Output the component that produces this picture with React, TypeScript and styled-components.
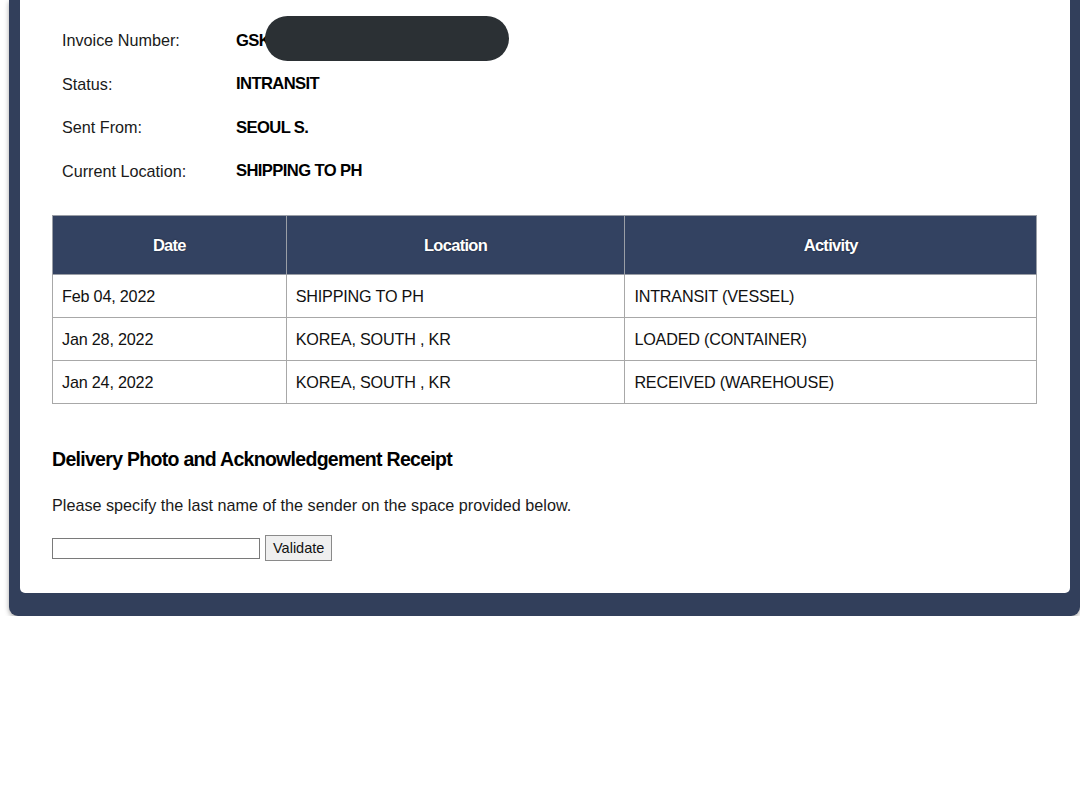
import React from "react";
import styled, { createGlobalStyle } from "styled-components";

const Global = createGlobalStyle`
  html, body { margin: 0; padding: 0; background: #ffffff; }
  body { font-family: "Liberation Sans", Arial, sans-serif; color: #111; overflow: hidden; }
`;

const Frame = styled.div`
  margin-left: 9px;
  width: 1071px;
  background: #323f5b;
  padding: 0 10px 23px 11px;
  box-sizing: border-box;
  border-radius: 0 0 9px 9px;
  box-shadow: 0 2px 5px rgba(0, 0, 0, 0.35);
`;

const Card = styled.div`
  background: #ffffff;
  border-radius: 0 0 5px 5px;
  padding: 19px 33px 32px 32px;
`;

const InfoGrid = styled.div`
  display: grid;
  grid-template-columns: 174px auto;
  padding-left: 10px;
  position: relative;
`;

const InfoLabel = styled.div`
  font-size: 16.2px;
  height: 43.5px;
  display: flex;
  align-items: center;
  color: #1a1a1a;
`;

const InfoValue = styled.div`
  font-size: 16.6px;
  height: 43.5px;
  display: flex;
  align-items: center;
  font-weight: bold;
  letter-spacing: -0.6px;
  color: #000;
  position: relative;
`;

const Redact = styled.span`
  position: absolute;
  left: 29px;
  top: -3px;
  width: 244px;
  height: 45px;
  border-radius: 23px;
  background: #2b3034;
`;

const Table = styled.table`
  width: 985px;
  border-collapse: collapse;
  margin-top: 22px;
  border: 1px solid #a0a0a0;
`;

const Th = styled.th<{ $w: number }>`
  width: ${(p) => p.$w}px;
  background: #334261;
  color: #fff;
  height: 59px;
  font-size: 16.5px;
  font-weight: bold;
  letter-spacing: -0.7px;
  text-shadow: 0 0 2px rgba(0, 0, 0, 0.5);
  border: 1px solid #9a9ea6;
  text-align: center;
  padding: 0;
  box-sizing: border-box;
`;

const Td = styled.td`
  height: 43px;
  font-size: 16.2px;
  border: 1px solid #a8a8a8;
  padding: 1px 9px 0;
  box-sizing: border-box;
  color: #111;
  letter-spacing: -0.2px;
`;

const Heading = styled.h2`
  margin: 38px 0 0;
  font-size: 19.5px;
  font-weight: bold;
  letter-spacing: -0.7px;
  color: #000;
  line-height: 34px;
`;

const Para = styled.p`
  margin: 17px 0 0;
  font-size: 16.2px;
  line-height: 24px;
  color: #1a1a1a;
`;

const FormRow = styled.div`
  margin-top: 18px;
  display: flex;
  align-items: center;
  gap: 5px;
`;

const Input = styled.input`
  width: 208px;
  height: 21px;
  box-sizing: border-box;
  border: 1px solid #7a7a7a;
  padding: 0 4px;
  margin: 0;
`;

const Button = styled.button`
  height: 26px;
  padding: 0 7px;
  font-family: "Liberation Sans", Arial, sans-serif;
  font-size: 14.5px;
  background: #efefef;
  border: 1px solid #8a8a8a;
  color: #111;
  border-radius: 0;
`;

const info: [string, string][] = [
  ["Invoice Number:", "GSK"],
  ["Status:", "INTRANSIT"],
  ["Sent From:", "SEOUL S."],
  ["Current Location:", "SHIPPING TO PH"],
];

const rows = [
  ["Feb 04, 2022", "SHIPPING TO PH", "INTRANSIT (VESSEL)"],
  ["Jan 28, 2022", "KOREA, SOUTH , KR", "LOADED (CONTAINER)"],
  ["Jan 24, 2022", "KOREA, SOUTH , KR", "RECEIVED (WAREHOUSE)"],
];

export default function App() {
  return (
    <>
      <Global />
      <Frame>
        <Card>
          <InfoGrid>
            {info.map(([l, v], i) => (
              <React.Fragment key={l}>
                <InfoLabel>{l}</InfoLabel>
                <InfoValue>
                  {v}
                  {i === 0 && <Redact />}
                </InfoValue>
              </React.Fragment>
            ))}
          </InfoGrid>
          <Table>
            <thead>
              <tr>
                <Th $w={234}>Date</Th>
                <Th $w={339}>Location</Th>
                <Th $w={412}>Activity</Th>
              </tr>
            </thead>
            <tbody>
              {rows.map((r) => (
                <tr key={r[0]}>
                  {r.map((c, j) => (
                    <Td key={j}>{c}</Td>
                  ))}
                </tr>
              ))}
            </tbody>
          </Table>
          <Heading>Delivery Photo and Acknowledgement Receipt</Heading>
          <Para>Please specify the last name of the sender on the space provided below.</Para>
          <FormRow>
            <Input type="text" />
            <Button>Validate</Button>
          </FormRow>
        </Card>
      </Frame>
    </>
  );
}
